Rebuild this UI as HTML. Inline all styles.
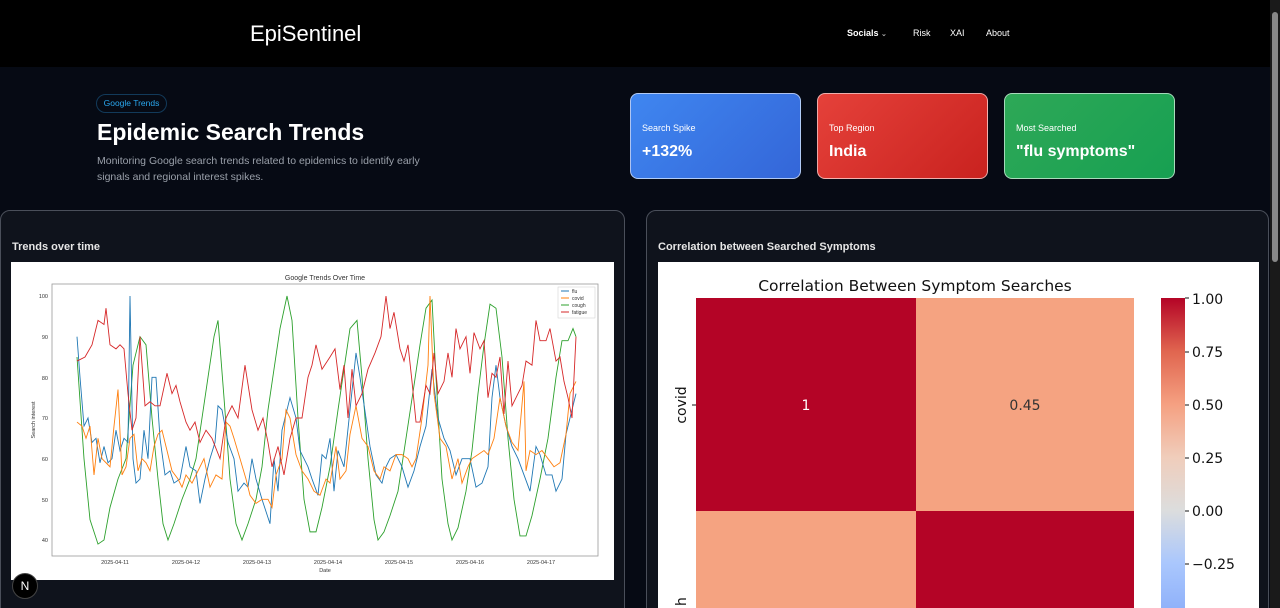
<!DOCTYPE html>
<html style="width:1280px;height:608px;overflow:hidden"><head><meta charset="utf-8"><style>
*{margin:0;padding:0;box-sizing:border-box}
body{width:1280px;height:608px;overflow:hidden;background:#060a14;font-family:"Liberation Sans",sans-serif;position:relative;color:#fff}
.nav{position:absolute;left:0;top:0;width:1270px;height:67px;background:#000}
.logo{position:absolute;left:250px;top:21px;font-size:22px;color:#fff}
.nl{position:absolute;top:28px;font-size:9px;color:#fff}
.badge{position:absolute;left:96px;top:94px;width:71px;height:19px;border:1px solid #123a5a;border-radius:10px;color:#2aa8f0;font-size:8.5px;line-height:17px;text-align:center}
h1{position:absolute;left:97px;top:119px;font-size:23px;font-weight:bold;color:#fff}
.sub{position:absolute;left:97px;top:153px;font-size:10.5px;line-height:16px;color:#9aa0aa;width:350px}
.card{position:absolute;top:93px;width:171px;height:86px;border-radius:8px;border:1px solid rgba(255,255,255,.6)}
.card .l{position:absolute;left:11px;top:29px;font-size:9px}
.card .v{position:absolute;left:11px;top:49px;font-size:16px;font-weight:bold}
.panel{position:absolute;top:210px;height:410px;background:#0f131c;border:1px solid #4a4f5a;border-radius:10px}
.pt{position:absolute;left:11px;top:30px;font-size:11px;font-weight:bold;color:#e6e6e6}
.scroll{position:absolute;left:1270px;top:0;width:10px;height:608px;background:#1a1a1a}
.thumb{position:absolute;left:1272px;top:12px;width:6px;height:250px;background:#888;border-radius:3px}
</style></head><body>
<div class="nav">
<div class="logo">EpiSentinel</div>
<div class="nl" style="left:847px;font-weight:bold">Socials <span style="font-size:7px;color:#aaa">⌄</span></div>
<div class="nl" style="left:913px">Risk</div>
<div class="nl" style="left:950px">XAI</div>
<div class="nl" style="left:986px">About</div>
</div>
<div class="badge">Google Trends</div>
<h1>Epidemic Search Trends</h1>
<div class="sub">Monitoring Google search trends related to epidemics to identify early signals and regional interest spikes.</div>
<div class="card" style="left:630px;background:linear-gradient(135deg,#3f86f0,#3466d8)"><div class="l">Search Spike</div><div class="v">+132%</div></div>
<div class="card" style="left:817px;background:linear-gradient(135deg,#e5413a,#c9221f)"><div class="l">Top Region</div><div class="v">India</div></div>
<div class="card" style="left:1004px;background:linear-gradient(135deg,#2ea857,#17a052)"><div class="l">Most Searched</div><div class="v">"flu symptoms"</div></div>

<div class="panel" style="left:0;width:625px"><div class="pt">Trends over time</div></div>
<div class="panel" style="left:646px;width:623px"><div class="pt">Correlation between Searched Symptoms</div></div>

<svg style="position:absolute;left:11px;top:262px" width="603" height="318" viewBox="11 262 603 318" font-family="Liberation Sans,sans-serif">
<rect x="11" y="262" width="603" height="318" fill="#fff"/>
<text x="325" y="280" font-size="7" text-anchor="middle" fill="#333">Google Trends Over Time</text>
<rect x="52" y="284" width="546" height="272" fill="none" stroke="#999" stroke-width="0.8"/>
<g font-size="5.5" fill="#333" text-anchor="end">
<text x="48" y="298">100</text><text x="48" y="339">90</text><text x="48" y="380">80</text><text x="48" y="420">70</text><text x="48" y="461">60</text><text x="48" y="502">50</text><text x="48" y="542">40</text>
</g>
<g font-size="5.5" fill="#333" text-anchor="middle">
<text x="115" y="564">2025-04-11</text><text x="186" y="564">2025-04-12</text><text x="257" y="564">2025-04-13</text><text x="328" y="564">2025-04-14</text><text x="399" y="564">2025-04-15</text><text x="470" y="564">2025-04-16</text><text x="541" y="564">2025-04-17</text>
<text x="325" y="572">Date</text>
</g>
<text x="35" y="420" font-size="5.5" fill="#333" text-anchor="middle" transform="rotate(-90 35 420)">Search interest</text>
<g transform="matrix(1 0 0 -4.067 0 702.7)" fill="none" stroke-width="0.9">
<polyline vector-effect="non-scaling-stroke" stroke="#2ca02c" points="77,85 84,60 90,45 98,39 104,40 110,48 118,55 126,60 133,83 140,90 146,88 152,70 158,55 163,44 168,40 174,44 182,50 190,55 196,60 202,70 208,80 214,90 218,94 224,75 230,55 236,44 242,40 248,44 256,50 262,58 268,72 274,82 280,92 287,100 292,94 298,70 304,50 310,42 316,42 322,48 330,58 338,72 344,82 350,92 357,94 362,80 368,60 374,45 378,40 384,42 390,46 398,52 406,65 414,78 420,88 426,97 432,99 436,80 442,55 448,44 452,40 458,43 466,52 472,62 478,76 484,88 490,98 496,97 502,85 508,65 514,50 520,41 526,41 532,46 540,55 548,65 556,80 562,89 568,89 573,92 576,90"/>
<polyline vector-effect="non-scaling-stroke" stroke="#1f77b4" points="77,90 80,80 84,68 88,70 92,64 96,65 100,59 104,63 108,59 112,60 116,67 120,62 124,65 128,64 130,100 133,60 136,54 140,55 144,67 148,60 152,80 156,80 160,65 165,56 170,57 174,54 180,55 186,63 190,58 196,57 200,49 205,55 210,60 215,64 218,73 222,72 228,64 234,60 238,52 244,54 248,53 252,60 256,55 262,50 270,44 274,60 278,52 282,67 286,71 290,75 296,70 300,62 308,58 312,55 318,51 322,61 326,60 330,65 334,52 338,62 344,58 350,72 356,86 360,80 366,70 370,63 376,56 382,54 386,58 390,60 396,61 402,58 408,53 414,57 420,63 426,68 432,82 438,70 444,65 450,62 456,56 462,60 470,60 476,53 482,54 488,58 492,75 496,83 500,75 506,68 512,63 518,60 524,56 530,52 536,63 540,61 546,56 552,56 556,52 562,55 566,66 570,70 576,76"/>
<polyline vector-effect="non-scaling-stroke" stroke="#ff7f0e" points="77,69 82,68 86,65 90,68 94,56 98,65 102,60 106,59 110,58 114,68 118,77 122,56 126,58 130,65 134,66 138,57 142,60 146,59 150,57 154,63 158,66 162,67 166,63 172,57 178,55 182,53 186,56 192,54 198,57 204,60 210,53 216,56 222,55 226,69 230,68 234,65 240,60 246,55 250,51 256,49 262,50 268,50 272,48 276,56 282,60 286,72 290,70 296,61 302,57 308,55 314,52 320,51 326,55 330,54 336,63 340,55 346,57 350,66 356,73 362,65 368,63 374,57 380,55 384,58 390,57 396,61 402,61 408,60 412,58 416,60 422,70 428,83 430,100 434,76 440,65 446,63 452,55 458,60 462,54 468,58 472,60 478,61 484,62 488,61 494,65 500,75 506,68 512,64 518,62 524,79 526,57 530,62 536,61 542,62 548,60 554,58 560,59 566,66 570,76 576,79"/>
<polyline vector-effect="non-scaling-stroke" stroke="#d62728" points="77,84 85,85 92,88 98,94 104,93 106,97 110,88 116,87 120,88 124,87 128,76 132,67 136,70 140,90 145,73 150,74 155,73 160,73 167,81 172,76 176,78 180,74 186,69 190,67 195,69 200,64 206,67 212,65 220,60 226,70 232,73 238,70 245,83 252,72 258,67 263,70 268,64 272,58 278,63 284,56 290,65 296,70 302,70 308,80 312,83 316,88 322,82 330,85 335,87 340,77 344,83 348,70 352,82 356,73 362,76 368,82 375,86 381,90 386,100 390,92 394,96 400,87 404,84 408,88 412,79 416,69 420,69 426,78 430,76 434,86 438,76 444,79 448,86 452,80 456,92 460,87 466,90 470,81 474,91 480,87 484,89 488,75 492,81 496,80 500,85 504,71 508,84 512,73 516,75 522,78 526,84 532,83 536,94 540,89 546,89 550,92 556,84 560,85 564,79 568,75 572,70 576,90"/>
</g>
<rect x="558" y="287" width="37" height="31" fill="#fff" stroke="#ccc" stroke-width="0.5"/>
<g font-size="5" fill="#333">
<line x1="561" y1="291" x2="569" y2="291" stroke="#1f77b4"/><text x="572" y="293">flu</text>
<line x1="561" y1="298" x2="569" y2="298" stroke="#ff7f0e"/><text x="572" y="300">covid</text>
<line x1="561" y1="305" x2="569" y2="305" stroke="#2ca02c"/><text x="572" y="307">cough</text>
<line x1="561" y1="312" x2="569" y2="312" stroke="#d62728"/><text x="572" y="314">fatigue</text>
</g>
</svg>

<svg style="position:absolute;left:658px;top:262px" width="601" height="346" viewBox="658 262 601 346" font-family="DejaVu Sans,sans-serif">
<defs><linearGradient id="cw" x1="0" y1="0" x2="0" y2="1">
<stop offset="0" stop-color="#b40426"/><stop offset="0.17" stop-color="#e0654f"/><stop offset="0.34" stop-color="#f5a081"/><stop offset="0.51" stop-color="#f0cdbb"/><stop offset="0.68" stop-color="#dcdddd"/><stop offset="0.85" stop-color="#aac7fd"/><stop offset="1" stop-color="#8fb1fa"/></linearGradient></defs>
<rect x="658" y="262" width="601" height="346" fill="#fff"/>
<text x="915" y="291" font-size="15.5" text-anchor="middle" fill="#111">Correlation Between Symptom Searches</text>
<rect x="696" y="298" width="220" height="213" fill="#b40426"/>
<rect x="916" y="298" width="218" height="213" fill="#f5a381"/>
<rect x="696" y="511" width="220" height="100" fill="#f5a381"/>
<rect x="916" y="511" width="218" height="100" fill="#b40426"/>
<text x="806" y="410" font-size="14" text-anchor="middle" fill="#fff">1</text>
<text x="1025" y="410" font-size="14" text-anchor="middle" fill="#333">0.45</text>
<text x="686" y="405" font-size="14" text-anchor="middle" fill="#111" transform="rotate(-90 686 405)">covid</text>
<line x1="692" y1="405" x2="696" y2="405" stroke="#111"/>
<text x="686" y="606" font-size="14" fill="#111" transform="rotate(-90 686 606)">h</text>
<rect x="1161" y="298" width="24" height="312" fill="url(#cw)"/>
<g font-size="14" fill="#111">
<line x1="1185" y1="298" x2="1189" y2="298" stroke="#111"/><text x="1192" y="304">1.00</text>
<line x1="1185" y1="352" x2="1189" y2="352" stroke="#111"/><text x="1192" y="357">0.75</text>
<line x1="1185" y1="405" x2="1189" y2="405" stroke="#111"/><text x="1192" y="410">0.50</text>
<line x1="1185" y1="458" x2="1189" y2="458" stroke="#111"/><text x="1192" y="463">0.25</text>
<line x1="1185" y1="511" x2="1189" y2="511" stroke="#111"/><text x="1192" y="516">0.00</text>
<line x1="1185" y1="564" x2="1189" y2="564" stroke="#111"/><text x="1192" y="569">−0.25</text>
</g>
</svg>

<div style="position:absolute;left:12px;top:573px;width:26px;height:26px;border-radius:50%;background:#000;border:1px solid #444;color:#fff;font-size:12px;line-height:24px;text-align:center">N</div>
<div class="scroll"></div><div class="thumb"></div>
</body></html>
